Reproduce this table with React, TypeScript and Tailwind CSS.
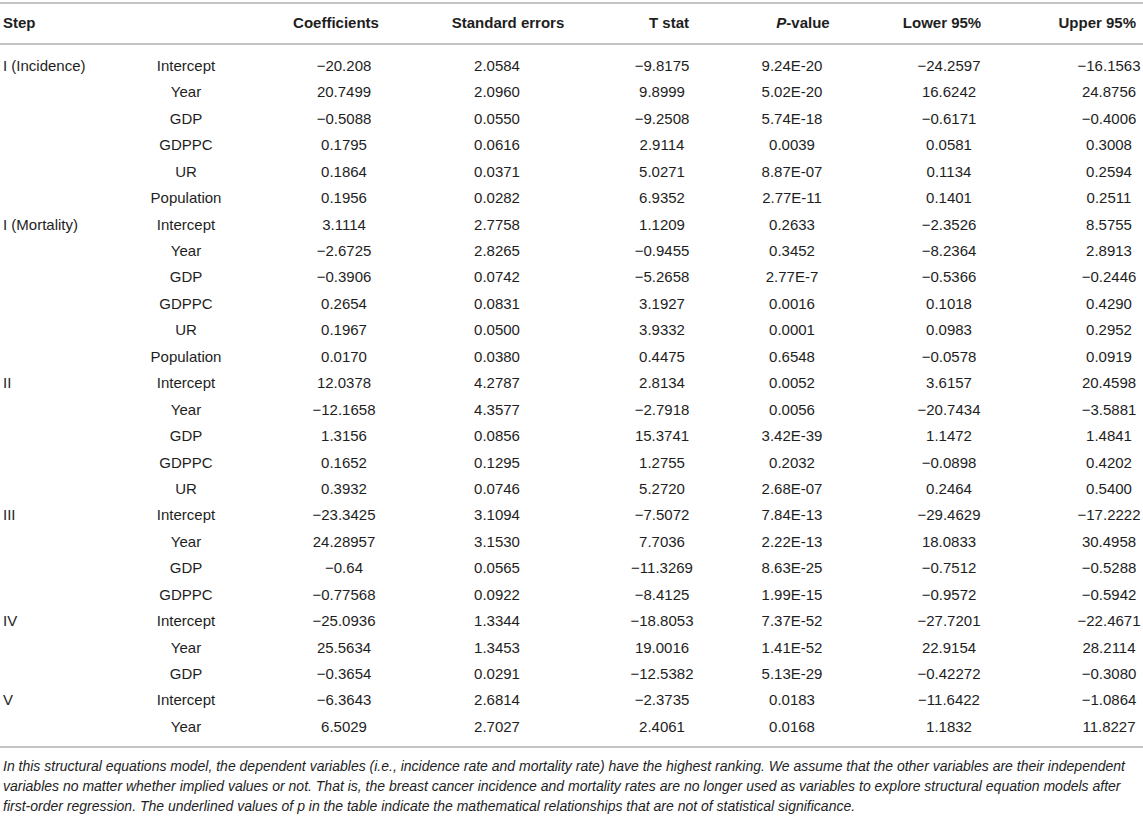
const ROWS: [string, string, string, string, string, string, string, string][] = [
    ['I (Incidence)', 'Intercept', '−20.208', '2.0584', '−9.8175', '9.24E-20', '−24.2597', '−16.1563'],
    ['', 'Year', '20.7499', '2.0960', '9.8999', '5.02E-20', '16.6242', '24.8756'],
    ['', 'GDP', '−0.5088', '0.0550', '−9.2508', '5.74E-18', '−0.6171', '−0.4006'],
    ['', 'GDPPC', '0.1795', '0.0616', '2.9114', '0.0039', '0.0581', '0.3008'],
    ['', 'UR', '0.1864', '0.0371', '5.0271', '8.87E-07', '0.1134', '0.2594'],
    ['', 'Population', '0.1956', '0.0282', '6.9352', '2.77E-11', '0.1401', '0.2511'],
    ['I (Mortality)', 'Intercept', '3.1114', '2.7758', '1.1209', '0.2633', '−2.3526', '8.5755'],
    ['', 'Year', '−2.6725', '2.8265', '−0.9455', '0.3452', '−8.2364', '2.8913'],
    ['', 'GDP', '−0.3906', '0.0742', '−5.2658', '2.77E-7', '−0.5366', '−0.2446'],
    ['', 'GDPPC', '0.2654', '0.0831', '3.1927', '0.0016', '0.1018', '0.4290'],
    ['', 'UR', '0.1967', '0.0500', '3.9332', '0.0001', '0.0983', '0.2952'],
    ['', 'Population', '0.0170', '0.0380', '0.4475', '0.6548', '−0.0578', '0.0919'],
    ['II', 'Intercept', '12.0378', '4.2787', '2.8134', '0.0052', '3.6157', '20.4598'],
    ['', 'Year', '−12.1658', '4.3577', '−2.7918', '0.0056', '−20.7434', '−3.5881'],
    ['', 'GDP', '1.3156', '0.0856', '15.3741', '3.42E-39', '1.1472', '1.4841'],
    ['', 'GDPPC', '0.1652', '0.1295', '1.2755', '0.2032', '−0.0898', '0.4202'],
    ['', 'UR', '0.3932', '0.0746', '5.2720', '2.68E-07', '0.2464', '0.5400'],
    ['III', 'Intercept', '−23.3425', '3.1094', '−7.5072', '7.84E-13', '−29.4629', '−17.2222'],
    ['', 'Year', '24.28957', '3.1530', '7.7036', '2.22E-13', '18.0833', '30.4958'],
    ['', 'GDP', '−0.64', '0.0565', '−11.3269', '8.63E-25', '−0.7512', '−0.5288'],
    ['', 'GDPPC', '−0.77568', '0.0922', '−8.4125', '1.99E-15', '−0.9572', '−0.5942'],
    ['IV', 'Intercept', '−25.0936', '1.3344', '−18.8053', '7.37E-52', '−27.7201', '−22.4671'],
    ['', 'Year', '25.5634', '1.3453', '19.0016', '1.41E-52', '22.9154', '28.2114'],
    ['', 'GDP', '−0.3654', '0.0291', '−12.5382', '5.13E-29', '−0.42272', '−0.3080'],
    ['V', 'Intercept', '−6.3643', '2.6814', '−2.3735', '0.0183', '−11.6422', '−1.0864'],
    ['', 'Year', '6.5029', '2.7027', '2.4061', '0.0168', '1.1832', '11.8227'],
];

const GRID = 'grid grid-cols-[120px_132px_184px_122px_208px_52px_262px_58px]';
const CELL = 'flex justify-center whitespace-nowrap';

export default function App() {
    return (
        <div className="w-[1143px] h-[816px] bg-white text-[#1e1e1e] overflow-hidden"
            style={{ fontFamily: '"Liberation Sans", Arial, sans-serif' }}>
            <div className="mt-[2px] border-t-2 border-[#c4c4c4]" />

            <div className={`${GRID} h-[39px] items-center text-[15px] font-bold`}>
                <div className="pl-[3px]">Step</div>
                <div />
                <div className={`${CELL} pr-[16px]`}>Coefficients</div>
                <div className={`${CELL} pl-[22px]`}>Standard errors</div>
                <div className={`${CELL} pl-[14px]`}>T stat</div>
                <div className={`${CELL} pl-[22px]`}><i>P</i>-value</div>
                <div className={`${CELL} pr-[14px]`}>Lower 95%</div>
                <div className="flex justify-end whitespace-nowrap pr-[2px]">Upper 95%</div>
            </div>

            <div className="border-t-2 border-[#c4c4c4]" />

            <div className="pt-[8px] pb-[6px] text-[15px]">
                {ROWS.map((r, i) => (
                    <div key={i} className={`${GRID} h-[26.44px] items-center`}>
                        <div className="pl-[3px] whitespace-nowrap">{r[0]}</div>
                        {r.slice(1).map((c, j) => (
                            <div key={j} className={CELL}>{c}</div>
                        ))}
                    </div>
                ))}
            </div>

            <div className="border-t-2 border-[#c4c4c4]" />

            <p className="pt-[8px] pl-[3px] pr-[6px] text-[14px] leading-[20px] italic">
                In this structural equations model, the dependent variables (i.e., incidence rate and mortality rate) have the highest ranking. We assume that the other variables are their independent variables no matter whether implied values or not. That is, the breast cancer incidence and mortality rates are no longer used as variables to explore structural equation models after first-order regression. The underlined values of p in the table indicate the mathematical relationships that are not of statistical significance.
            </p>
        </div>
    );
}
